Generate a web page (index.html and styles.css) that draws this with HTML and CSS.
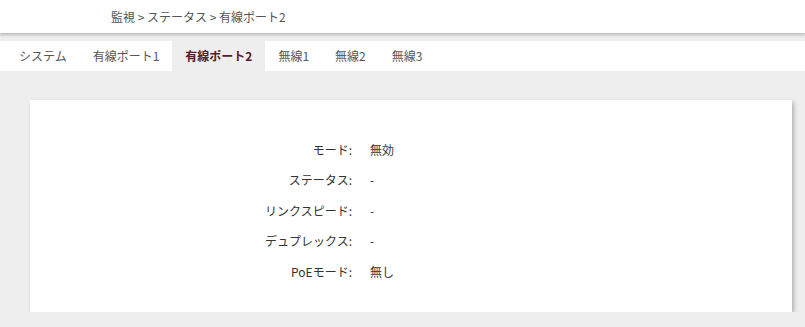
FILE: index.html
```html
<!DOCTYPE html>
<html lang="ja">
<head>
    <meta charset="UTF-8">
    <meta name="viewport" content="width=device-width, initial-scale=1.0">
    <title>有線ポート2</title>
<link rel="stylesheet" href="styles.css">
</head>
  <body>
  <div class="header">
    <div class="crumbs">監視 &gt; ステータス &gt; 有線ポート2</div>
  </div>
  <ul class="tabs">
    <li>システム</li>
    <li>有線ポート1</li>
    <li class="active">有線ポート2</li>
    <li>無線1</li>
    <li>無線2</li>
    <li>無線3</li>
  </ul>
  <div class="content">
    <div class="card">
      <div class="row"><span class="label">モード:</span><span class="value">無効</span></div>
      <div class="row"><span class="label">ステータス:</span><span class="value">-</span></div>
      <div class="row"><span class="label">リンクスピード:</span><span class="value">-</span></div>
      <div class="row"><span class="label">デュプレックス:</span><span class="value">-</span></div>
      <div class="row"><span class="label">PoEモード:</span><span class="value">無し</span></div>
    </div>
  </div>
  </body>
</html>
```

FILE: styles.css
```css
body {
  margin: 0;
  background: #eeeeee;
  font-family: "Noto Sans CJK JP", "Noto Sans", sans-serif;
  font-size: 12px;
  color: #333;
}
.header {
  height: 33px;
  background: #fff;
  box-shadow: 0 2px 3px rgba(0, 0, 0, 0.22);
  display: flex;
  align-items: center;
  padding-left: 111px;
}
.crumbs {
  color: #555;
}
.tabs {
  list-style: none;
  margin: 8px 0 0 0;
  padding: 0 0 0 6px;
  height: 30px;
  background: #fff;
  display: flex;
}
.tabs li {
  padding: 0 13px;
  line-height: 30px;
  color: #555;
}
.tabs li.active {
  background: #eeeeee;
  color: #5a1a2c;
  font-weight: bold;
}
.content {
  padding: 29px 13px 0 30px;
}
.card {
  background: #fff;
  height: 212px;
  box-sizing: border-box;
  padding-top: 34px;
  box-shadow: 2px 2px 4px rgba(0, 0, 0, 0.25);
}
.row {
  display: flex;
  height: 30.5px;
  align-items: center;
}
.label {
  width: 322px;
  text-align: right;
}
.value {
  margin-left: 18px;
}
```
